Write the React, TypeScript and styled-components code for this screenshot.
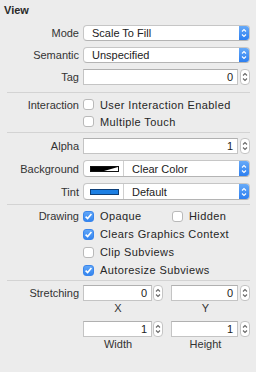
import styled, { createGlobalStyle } from 'styled-components';

const GlobalStyle = createGlobalStyle`
    html, body {
        margin: 0;
        padding: 0;
        background: #ececec;
    }
    body {
        font-family: "Liberation Sans", Arial, sans-serif;
        font-size: 11px;
        color: #262626;
    }
`;

const Panel = styled.div`
    width: 256px;
    height: 372px;
    background: #ececec;
    box-sizing: border-box;
    padding-right: 6px;
`;

const Header = styled.div`
    height: 25px;
    box-sizing: border-box;
    padding: 4px 0 0 4px;
    font-weight: bold;
    line-height: 13px;
    color: #2a2a2a;
`;

const Section = styled.div<{ $top: number; $bottom: number; $gap?: number }>`
    display: flex;
    flex-direction: column;
    gap: ${p => p.$gap ?? 0}px;
    padding-top: ${p => p.$top}px;
    padding-bottom: ${p => p.$bottom}px;
`;

const Divider = styled.div`
    height: 1px;
    margin-left: 7px;
    background: #d3d3d3;
`;

const Row = styled.div<{ $h: number; $top?: boolean }>`
    display: grid;
    grid-template-columns: 79px 1fr;
    column-gap: 4px;
    align-items: ${p => (p.$top ? 'start' : 'center')};
    height: ${p => p.$h}px;
`;

const Label = styled.div`
    text-align: right;
    color: #333;
    white-space: nowrap;
    line-height: 16px;
`;

const Popup = styled.div<{ $h?: number }>`
    display: flex;
    align-items: stretch;
    height: ${p => p.$h ?? 16}px;
    box-sizing: border-box;
    background: #fff;
    border: 1px solid #c6c6c6;
    border-bottom-color: #b4b4b4;
    border-radius: 4px;
    overflow: hidden;
`;

const PopupText = styled.div`
    flex: 1;
    padding-left: 8px;
    display: flex;
    align-items: center;
    color: #222;
`;

const BlueArrows = styled.div`
    width: 10px;
    background: linear-gradient(#67aaf8, #2d7ff0);
    display: flex;
    align-items: center;
    justify-content: center;
`;

const SwatchCell = styled.div`
    width: 40px;
    border-right: 1px solid #cfcfcf;
    display: flex;
    align-items: center;
    padding-left: 6px;
    box-sizing: border-box;
`;

const Swatch = styled.div<{ $fill?: string; $edge?: string }>`
    width: 29px;
    height: 6px;
    box-sizing: border-box;
    border: 1px solid ${p => p.$edge ?? '#111'};
    background: ${p => p.$fill ?? '#fff'};
    display: flex;
`;

const FieldWrap = styled.div<{ $gap: number }>`
    display: flex;
    align-items: center;
    gap: ${p => p.$gap}px;
`;

const Field = styled.div`
    flex: 1;
    height: 16px;
    box-sizing: border-box;
    background: #fff;
    border: 1px solid #c4c4c4;
    border-top-color: #b0b0b0;
    text-align: right;
    padding-right: 4px;
    line-height: 14px;
    color: #222;
`;

const Stepper = styled.div`
    width: 10px;
    height: 16px;
    box-sizing: border-box;
    border: 1px solid #c4c4c4;
    border-radius: 4px;
    background: #fff;
    display: flex;
    align-items: center;
    justify-content: center;
`;

const CheckRow = styled.div`
    display: flex;
    align-items: center;
    gap: 6px;
    color: #262626;
    white-space: nowrap;
    letter-spacing: 0.4px;
`;

const Box = styled.div<{ $on?: boolean }>`
    width: 11px;
    height: 11px;
    flex: none;
    box-sizing: border-box;
    border-radius: 3px;
    border: 1px solid ${p => (p.$on ? '#3a86ec' : '#b9b9b9')};
    background: ${p => (p.$on ? 'linear-gradient(#60a6f8, #3485ef)' : '#fff')};
    display: flex;
    align-items: center;
    justify-content: center;
`;

const Pair = styled.div`
    display: grid;
    grid-template-columns: 89px auto;
    align-items: center;
`;

const StretchGrid = styled.div`
    display: grid;
    grid-template-columns: 80px 79px;
    column-gap: 8px;
`;

const StretchCell = styled.div`
    display: flex;
    flex-direction: column;
`;

const Caption = styled.div`
    height: 13px;
    line-height: 13px;
    margin-top: 1px;
    text-align: center;
    color: #333;
    padding-right: 10px;
`;

const Arrows = ({ color }: { color: string }) => (
    <svg width="6" height="14" viewBox="0 0 6 14">
        <path d="M1 5.5 L3 3.5 L5 5.5 M1 8.5 L3 10.5 L5 8.5" fill="none" stroke={color} strokeWidth="1.1" />
    </svg>
);

const Check = () => (
    <svg width="9" height="9" viewBox="0 0 9 9">
        <path d="M1.6 4.6 L3.6 6.6 L7.4 2" fill="none" stroke="#fff" strokeWidth="1.6" />
    </svg>
);

const SelectBox = ({ text }: { text: string }) => (
    <Popup>
        <PopupText>{text}</PopupText>
        <BlueArrows><Arrows color="#fff" /></BlueArrows>
    </Popup>
);

const NumberField = ({ value, gap }: { value: string; gap: number }) => (
    <FieldWrap $gap={gap}>
        <Field>{value}</Field>
        <Stepper><Arrows color="#666" /></Stepper>
    </FieldWrap>
);

const CheckItem = ({ on, text }: { on?: boolean; text: string }) => (
    <CheckRow>
        <Box $on={on}>{on && <Check />}</Box>
        {text}
    </CheckRow>
);

const ClearSwatch = () => (
    <Swatch>
        <svg width="27" height="4" viewBox="0 0 27 4" preserveAspectRatio="none">
            <polygon points="0,0 27,0 13,4 0,4" fill="#000" />
        </svg>
    </Swatch>
);

const App = () => (
    <Panel>
        <GlobalStyle />
        <Header>View</Header>
        <Section $top={0} $bottom={7} $gap={6}>
            <Row $h={16}><Label>Mode</Label><SelectBox text="Scale To Fill" /></Row>
            <Row $h={16}><Label>Semantic</Label><SelectBox text="Unspecified" /></Row>
            <Row $h={16}><Label>Tag</Label><NumberField value="0" gap={2} /></Row>
        </Section>
        <Divider />
        <Section $top={3} $bottom={2}>
            <Row $h={17}><Label>Interaction</Label><CheckItem text="User Interaction Enabled" /></Row>
            <Row $h={17}><Label /><CheckItem text="Multiple Touch" /></Row>
        </Section>
        <Divider />
        <Section $top={5} $bottom={4} $gap={6}>
            <Row $h={16}><Label>Alpha</Label><NumberField value="1" gap={2} /></Row>
            <Row $h={17}>
                <Label>Background</Label>
                <Popup $h={17}>
                    <SwatchCell><ClearSwatch /></SwatchCell>
                    <PopupText>Clear Color</PopupText>
                    <BlueArrows><Arrows color="#fff" /></BlueArrows>
                </Popup>
            </Row>
            <Row $h={17}>
                <Label>Tint</Label>
                <Popup $h={17}>
                    <SwatchCell><Swatch $fill="#1c7fe3" $edge="#0d3f78" /></SwatchCell>
                    <PopupText>Default</PopupText>
                    <BlueArrows><Arrows color="#fff" /></BlueArrows>
                </Popup>
            </Row>
        </Section>
        <Divider />
        <Section $top={2} $bottom={1}>
            <Row $h={18}>
                <Label>Drawing</Label>
                <Pair>
                    <CheckItem on text="Opaque" />
                    <CheckItem text="Hidden" />
                </Pair>
            </Row>
            <Row $h={18}><Label /><CheckItem on text="Clears Graphics Context" /></Row>
            <Row $h={18}><Label /><CheckItem text="Clip Subviews" /></Row>
            <Row $h={18}><Label /><CheckItem on text="Autoresize Subviews" /></Row>
        </Section>
        <Divider />
        <Section $top={4} $bottom={0} $gap={6}>
            <Row $h={30} $top>
                <Label>Stretching</Label>
                <StretchGrid>
                    <StretchCell><NumberField value="0" gap={1} /><Caption>X</Caption></StretchCell>
                    <StretchCell><NumberField value="0" gap={2} /><Caption>Y</Caption></StretchCell>
                </StretchGrid>
            </Row>
            <Row $h={30} $top>
                <Label />
                <StretchGrid>
                    <StretchCell><NumberField value="1" gap={1} /><Caption>Width</Caption></StretchCell>
                    <StretchCell><NumberField value="1" gap={2} /><Caption>Height</Caption></StretchCell>
                </StretchGrid>
            </Row>
        </Section>
    </Panel>
);

export default App;
